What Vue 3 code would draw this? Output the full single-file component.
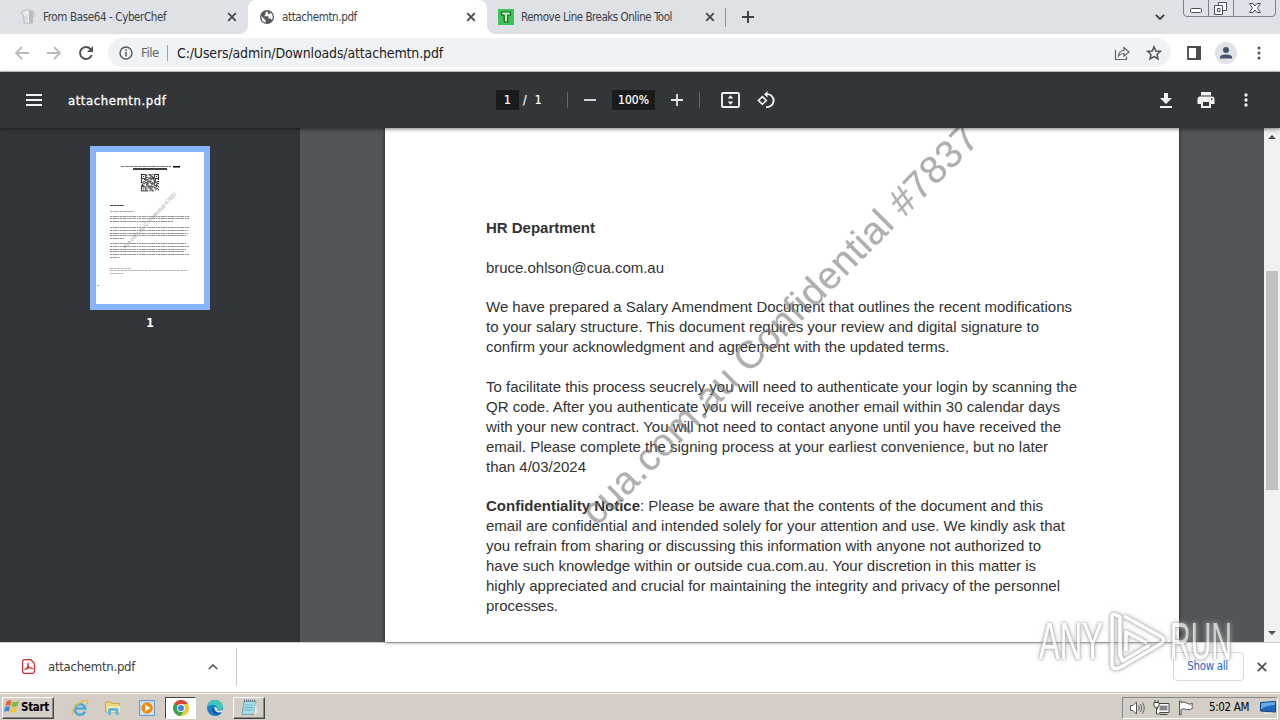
<script setup>
const paras = [
  [{ b: 'HR Department', w: 109 }],
  [{ t: 'bruce.ohlson@cua.com.au', w: 178 }],
  [
    { t: 'We have prepared a Salary Amendment Document that outlines the recent modifications', w: 586 },
    { t: 'to your salary structure. This document requires your review and digital signature to', w: 553 },
    { t: 'confirm your acknowledgment and agreement with the updated terms.', w: 463.5 },
  ],
  [
    { t: 'To facilitate this process seucrely you will need to authenticate your login by scanning the', w: 591 },
    { t: 'QR code. After you authenticate you will receive another email within 30 calendar days', w: 574 },
    { t: 'with your new contract. You will not need to contact anyone until you have received the', w: 575 },
    { t: 'email. Please complete the signing process at your earliest convenience, but no later', w: 562 },
    { t: 'than 4/03/2024', w: 100 },
  ],
  [
    { b: 'Confidentiality Notice', t: ': Please be aware that the contents of the document and this', w: 557 },
    { t: 'email are confidential and intended solely for your attention and use. We kindly ask that', w: 579 },
    { t: 'you refrain from sharing or discussing this information with anyone not authorized to', w: 555 },
    { t: 'have such knowledge within or outside cua.com.au. Your discretion in this matter is', w: 550 },
    { t: 'highly appreciated and crucial for maintaining the integrity and privacy of the personnel', w: 574 },
    { t: 'processes.', w: 72 },
  ],
]
const thumbLines = [
  [63, 80], [65, 79], [68, 63], [74, 80], [77, 78], [80, 78], [82, 76], [85, 14],
  [90, 76], [93, 79], [96, 76], [98, 75], [101, 79], [104, 10],
]
const qr = []
for (let y = 0; y < 17; y++) {
  for (let x = 0; x < 17; x++) {
    const fx = x > 8 ? 16 - x : x
    const fy = y > 8 ? 16 - y : y
    const finder = fx < 5 && fy < 5 && !(x > 8 && y > 8)
    const on = finder
      ? fx === 0 || fy === 0 || fx === 4 || fy === 4 || (fx === 2 && fy === 2)
      : (x * x * 7 + y * y * 11 + x * y * 5 + x * 3) % 13 < 7
    if (on) qr.push([x, y])
  }
}
</script>

<template>
  <div class="screen">
    <header class="tabs">
      <div class="tab first">
        <svg class="fav" viewBox="0 0 16 16"><path d="M3 6Q0 2 4 2Q7-1 10 2Q15 1 14 7L12 8V14H4V8Z" fill="#eee" stroke="#b5b5b5"/><path d="M9 2H13V14H9Z" fill="#bbb"/><path d="M5 7V12M7 6V12" stroke="#ccc"/></svg>
        <span class="tt">From Base64 - CyberChef</span>
        <svg class="x" viewBox="0 0 10 10"><path d="M1.2 1.2L8.8 8.8M8.8 1.2L1.2 8.8"/></svg>
      </div>
      <div class="tab active">
        <svg class="fav" viewBox="0 0 16 16"><circle cx="8" cy="8" r="7" fill="#55585c"/><path d="M2.3 7L6.6 11.2V13.8Q2 12 2.3 7ZM8 2.3L6.3 4V6L5 7.3H9.5V9.5H11.5L13 11Q15 6 11.5 3.5L10.5 5H9V3.8Z" fill="#fff"/></svg>
        <span class="tt">attachemtn.pdf</span>
        <svg class="x" viewBox="0 0 10 10"><path d="M1.2 1.2L8.8 8.8M8.8 1.2L1.2 8.8"/></svg>
      </div>
      <div class="tab third">
        <svg class="fav" viewBox="0 0 16 16"><path d="M0 0H16V16H0Z" fill="#3fc45a"/><path d="M3.500 3H12.500V6H9.800V13H6.200V6H3.500Z" fill="#c4f3c0" stroke="#175d25" stroke-width="1.200" stroke-linejoin="round"/></svg>
        <span class="tt">Remove Line Breaks Online Tool</span>
        <svg class="x" viewBox="0 0 10 10"><path d="M1.2 1.2L8.8 8.8M8.8 1.2L1.2 8.8"/></svg>
      </div>
      <i class="tabsep"></i>
      <svg class="plus" viewBox="0 0 12 12"><path d="M6 0V12M0 6H12" stroke="#3c4043" stroke-width="2"/></svg>
      <svg class="chev" viewBox="0 0 10 6"><path d="M.8 .8L5 5L9.2 .8" fill="none" stroke="#3c4043" stroke-width="1.8"/></svg>
      <svg class="winctl" viewBox="0 0 94 17"><path d="M.5 0V13Q.5 16.5 4 16.5H89Q92.5 16.5 92.5 13V0M25.5 0V16M50.5 0V16" fill="#dfe2e8" stroke="#7c818b"/><g fill="#fff" stroke="#4b505a"><rect x="7.500" y="8.500" width="11" height="4" rx="1"/><path d="M35.500 2.500H43.500V10.500H35.500Z"/><path d="M31.500 5.500H39.500V14.500H31.500Z"/><path d="M34.500 8.500H37V11.500H34.500Z"/><path d="M66.500 3.500H70L72 6L74 3.500H77.500L74.500 8L77.500 12.500H74L72 10L70 12.500H66.500L69.500 8Z"/></g></svg>
    </header>

    <div class="nav">
      <svg class="nv a" viewBox="0 0 16 16"><path d="M15 8H2M8 2L2 8L8 14" fill="none" stroke="#b9bbbe" stroke-width="1.8"/></svg>
      <svg class="nv b" viewBox="0 0 16 16"><path d="M1 8H14M8 2L14 8L8 14" fill="none" stroke="#b9bbbe" stroke-width="1.8"/></svg>
      <svg class="nv c" viewBox="0 0 16 16"><path d="M13.700 10A6 6 0 1 1 12.600 4.100L14 5.700" fill="none" stroke="#505357" stroke-width="2"/><path d="M15 1V7H9Z" fill="#505357"/></svg>
      <div class="omni">
        <svg class="info" viewBox="0 0 14 14"><circle cx="7" cy="7" r="6" fill="none" stroke="#55595d" stroke-width="1.400"/><path d="M7 6V10.500M7 3.500V5" stroke="#55595d" stroke-width="1.500"/></svg>
        <span class="file">File</span><i></i>
        <span class="url">C:/Users/admin/Downloads/attachemtn.pdf</span>
        <svg class="share" viewBox="0 0 16 16"><path d="M1.500 5V14.500H12.500V11.500M4.500 11Q5 5.500 10 5.500V2.500L15 7L10 11V8.500Q6.500 8.500 4.500 11Z" fill="none" stroke="#606469" stroke-width="1.200"/></svg>
        <svg class="star" viewBox="0 0 16 16"><path d="M8 1.800L9.800 6L14.500 6.400L11 9.500L12 14L8 11.600L4 14L5 9.500L1.500 6.400L6.200 6Z" fill="none" stroke="#505458" stroke-width="1.500"/></svg>
      </div>
      <svg class="panel" viewBox="0 0 14 14"><path d="M1 1H13V13H1Z" fill="#fff" stroke="#494c50" stroke-width="1.800"/><path d="M9 0H14V14H9Z" fill="#494c50"/></svg>
      <svg class="avatar" viewBox="0 0 22 22"><circle cx="11" cy="11" r="11" fill="#dfe2e7"/><circle cx="11" cy="8" r="3" fill="#47536f"/><path d="M5 16.500V15Q5 12.500 11 12.500T17 15V16.500Z" fill="#47536f"/></svg>
      <svg class="dots" viewBox="0 0 4 14"><g fill="#505357"><circle cx="2" cy="2" r="1.500"/><circle cx="2" cy="7" r="1.500"/><circle cx="2" cy="12" r="1.500"/></g></svg>
    </div>

    <div class="pdfbar">
      <svg class="menu" viewBox="0 0 16 12"><path d="M0 1H16M0 6H16M0 11H16" stroke="#f4f4f4" stroke-width="2"/></svg>
      <span class="title">attachemtn.pdf</span>
      <span class="box one">1</span><span class="of">/&nbsp; 1</span>
      <i class="s1"></i>
      <svg class="minus" viewBox="0 0 12 12"><path d="M0 6H12" stroke="#e6e7e8" stroke-width="1.800"/></svg>
      <span class="box pct">100%</span>
      <svg class="add" viewBox="0 0 12 12"><path d="M0 6H12M6 0V12" stroke="#e6e7e8" stroke-width="1.800"/></svg>
      <i class="s2"></i>
      <svg class="fit" viewBox="0 0 19 16"><rect x="1" y="1" width="17" height="14" rx="1" fill="none" stroke="#f1f1f1" stroke-width="1.900"/><path d="M9.500 3.300L12.300 6.500H6.700ZM9.500 12.700L12.300 9.500H6.700Z" fill="#f1f1f1"/></svg>
      <svg class="rot" viewBox="0 0 18 18"><path d="M9 3.200A6.500 6.500 0 1 1 9 16" fill="none" stroke="#f1f1f1" stroke-width="1.900"/><path d="M10.500 0V6.400L7 3.200Z" fill="#f1f1f1"/><path d="M5.400 5.600L9.300 9.500L5.400 13.400L1.500 9.500Z" fill="#323639" stroke="#f1f1f1" stroke-width="1.700"/></svg>
      <svg class="dl" viewBox="0 0 12 15"><path d="M4 0H8V5H12L6 11L0 5H4ZM0 13H12V15H0Z" fill="#f1f1f1"/></svg>
      <svg class="print" viewBox="0 0 18 16"><path d="M4 0H14V3.500H4ZM3 4.500H15Q17.500 4.500 17.500 7.500V12H14V16H4V12H.5V7.500Q.5 4.500 3 4.500Z" fill="#f1f1f1"/><path d="M6 10H12V14H6ZM14 6.500H15.500V8H14Z" fill="#323639"/></svg>
      <svg class="more" viewBox="0 0 4 14"><g fill="#f1f1f1"><circle cx="2" cy="2" r="1.700"/><circle cx="2" cy="7" r="1.700"/><circle cx="2" cy="12" r="1.700"/></g></svg>
    </div>

    <main class="viewer">
      <aside>
        <div class="thumb">
          <svg viewBox="0 0 108 152">
            <path d="M25 14.500H75" stroke="#666" stroke-width=".9" stroke-dasharray="3 .5 5 .4"/><path d="M77 14.700H84M37 17H71" stroke="#000" stroke-width="1.400"/>
            <g transform="translate(45 22)"><rect v-for="([x, y], i) in qr" :key="i" :x="x * 1.06" :y="y * 1.02" width="1.08" height="1.04" fill="#222"/></g>
            <path d="M14 53.500H28" stroke="#444" stroke-width="1.100" stroke-dasharray="3 .3"/><path d="M14 59.500H38" stroke="#888" stroke-width=".8" stroke-dasharray="2 .5"/>
            <path v-for="([y, w], i) in thumbLines" :key="i" :d="`M14 ${y + 1.5}h${w}`" stroke="#888" stroke-width=".9" stroke-dasharray="2.500 .5 4 .6 1.500 .5"/>
            <path d="M14 116.500H35M14 118.500H92M14 121.500H28" stroke="#999" stroke-width=".7" stroke-dasharray="3 .5"/><path d="M1 133.500H3.500" stroke="#aaa"/>
            <text transform="translate(29 97) rotate(-46.500)" textLength="76" font-size="5.800" fill="#a9a9a9">cua.com.au Confidential #7837</text>
          </svg>
        </div>
        <span>1</span>
      </aside>
      <section class="canvas">
        <article class="page">
          <div v-for="(p, i) in paras" :key="i" class="para">
            <svg v-for="(l, j) in p" :key="j" class="line"><text x="0" y="15" :textLength="l.w"><tspan v-if="l.b" font-weight="bold">{{ l.b }}</tspan><tspan v-if="l.t">{{ l.t }}</tspan></text></svg>
          </div>
          <svg class="mark" viewBox="0 0 794 514"><text transform="translate(212 399) rotate(-45.200)" textLength="545" font-size="38.500">cua.com.au Confidential #7837</text></svg>
        </article>
      </section>
      <div class="scroll"><b class="up"></b><div class="grip"></div><b class="down"></b></div>
    </main>

    <footer class="shelf">
      <svg class="pdf" viewBox="0 0 14 16"><path d="M2 .7H9.500L13.300 4.500V13.500Q13.300 15.300 11.500 15.300H2.500Q.7 15.300 .7 13.500V2Z" fill="#fff" stroke="#d62b3b" stroke-width="1.300"/><path d="M3 11.700C5.500 10.500 7.500 7 6.500 4.500C5 6.500 8 10.500 11.200 10.200C9 8.600 5 9.500 3 11.700Z" fill="none" stroke="#d62b3b" stroke-width="1.200"/></svg>
      <span class="name">attachemtn.pdf</span>
      <svg class="upc" viewBox="0 0 10 6"><path d="M.8 5L5 1L9.200 5" fill="none" stroke="#505357" stroke-width="1.600"/></svg>
      <i></i>
      <button>Show all</button>
      <svg class="close" viewBox="0 0 10 10"><path d="M.8 .8L9.200 9.200M9.200 .8L.8 9.200" stroke="#505357" stroke-width="1.800"/></svg>
    </footer>

    <div class="taskbar">
      <div class="start">
        <svg viewBox="0 0 16 14"><path d="M2.500 2Q5 0 7.500 1.500L6.300 6.300Q4 5 1.300 6.500Z" fill="#e7653b"/><path d="M8.500 2Q11.500 3.500 15 1.500L13.500 6.500Q10.500 8 7.300 6.800Z" fill="#7dbb42"/><path d="M1 7.500Q4 6 6 7.300L5 12Q3 11 0 12Z" fill="#3f8ed8"/><path d="M7 7.800Q10 9 13.200 7.500L12 12Q9 14 6 12.500Z" fill="#f3c33c"/></svg>
        Start
      </div>
      <svg class="tk ie" viewBox="0 0 18 18"><path d="M14 12.500A5.300 5.300 0 1 1 14.300 9.500H5" fill="none" stroke="#48a9df" stroke-width="2.500"/><path d="M2 16Q-1 13 6 6Q14 0 16.500 2Q17.500 3.500 15.500 6" fill="none" stroke="#e5b93c" stroke-width="1.300"/></svg>
      <svg class="tk ex" viewBox="0 0 18 18"><path d="M1.500 3H7L8 4.500H15.500V13H1.500Z" fill="#efd77c" stroke="#c9a84c"/><path d="M3 7H16V13H3Z" fill="#f8eaa9"/><path d="M4 16V10.500Q4 9 5.500 9H13Q14.500 9 14.500 10.500V16H11.500V12H7V16Z" fill="#64b6dd"/></svg>
      <svg class="tk wm" viewBox="0 0 18 18"><path d="M1.500 1.500H16.500V16.500H1.500Z" fill="#b5d9ef" stroke="#6d9dc4"/><path d="M3 4H15V15H3Z" fill="#dceaf4"/><circle cx="9" cy="9" r="5.800" fill="#f38a18"/><path d="M7 5.500L12.500 9L7 12.500Z" fill="#fff"/></svg>
      <div class="slot chrome"><svg class="tk" viewBox="0 0 18 18"><circle cx="9" cy="9" r="8" fill="#f6c52b"/><path d="M9 9L2.100 5A8 8 0 0 1 15.900 5H9Z" fill="#db4437"/><path d="M2.100 5A8 8 0 0 0 8.500 17L12.500 11L9 9Z" fill="#37a455"/><circle cx="9" cy="9" r="4" fill="#fff"/><circle cx="9" cy="9" r="3.100" fill="#4285f4"/></svg></div>
      <svg class="tk edge" viewBox="0 0 18 18"><circle cx="9" cy="9" r="8" fill="#1683cf"/><path d="M1.200 8Q3 1 9 1Q16.500 1.500 17 8Q16 12 11 11Q12 7 8 6Q4 5 1.200 8Z" fill="#40c8b6"/><path d="M7 8Q4.500 12 9 15.500Q13 17 15.500 13.500Q9.500 14.500 8.500 10Z" fill="#1456a2"/><path d="M8.500 8Q11 7.500 11 11Q12 12.500 17 11L16 13Q10 14.500 8.500 10Z" fill="#e5edf0"/></svg>
      <div class="slot note"><svg class="tk" viewBox="0 0 18 18"><path d="M4 2.500H16L14 15.500H2Z" fill="#a5dce6" stroke="#7c9fab"/><path d="M4 1.500H16" stroke="#596b72" stroke-width="1.600" stroke-dasharray="1 1"/><path d="M5 6H13M4.500 8.500H13M4 11H12.500" stroke="#6fb8c8"/><path d="M14 15.500L16 3L17 14Z" fill="#e9eef0"/></svg></div>
      <div class="tray">
        <svg class="vol" viewBox="0 0 17 16"><path d="M1.500 5.500H4L7.500 2V14L4 10.500H1.500Z" fill="#fff" stroke="#555"/><path d="M9.500 5.500Q11 8 9.500 10.500M11.500 4Q14 8 11.500 12M13.500 2.500Q17 8 13.500 13.500" fill="none" stroke="#666"/></svg>
        <svg class="net" viewBox="0 0 17 16"><path d="M5.500 4.500H15.500V11.500H5.500Z" fill="#888" stroke="#fff" stroke-width="2"/><path d="M4.500 3.500H16V12.500H4.500ZM7 14.500H14.500" fill="none" stroke="#444"/><path d="M1 2.500H6V6Q6 7.500 3.500 7.500T1 6ZM2 0V3M5 0V3M3.500 7V14H7" fill="#fff" stroke="#444"/></svg>
        <svg class="flag" viewBox="0 0 16 16"><path d="M1.500 1V15H3V9.500Q6 8 8.500 9.500Q12 11 15 7.500Q13 7 14.500 3.500Q11 5 8.500 3Q6 1.500 3 2.500V1Z" fill="#fff" stroke="#555"/></svg>
        <span>5:02 AM</span>
        <svg class="desk" viewBox="0 0 16 13"><path d="M.5 1.500L15.500 .5V11L.5 10Z" fill="#1f67bd" stroke="#173f7c"/><path d="M1 2L15 1V4Q7 4 1 8Z" fill="#5fa9e8"/><path d="M4 12.300H12" stroke="#eee"/></svg>
      </div>
    </div>

    <svg class="brand" viewBox="0 0 200 76">
      <text x="5" y="56" textLength="64" lengthAdjust="spacingAndGlyphs">ANY</text>
      <text x="136" y="56" textLength="62" lengthAdjust="spacingAndGlyphs">RUN</text>
      <path d="M78 50V14Q78 10 82 12L86 14V52L89 58L116 42M92 48V29L113 40M90 13L128 34Q131 37 128 40L87 64Q78 68 78 61V50"/>
    </svg>
  </div>
</template>

<style>
body { margin: 0; overflow: hidden; }
</style>
<style scoped>
* { box-sizing: border-box; }
svg { display: block; flex: none; }
.screen { width: 1280px; height: 720px; position: relative; overflow: hidden; display: flex; flex-direction: column; background: #fff; font: 12px "DejaVu Sans Condensed", "DejaVu Sans", sans-serif; font-stretch: condensed; color: #3c4043; }
.screen > * { flex: none; }
span { white-space: nowrap; }
.tabs { height: 34px; background: #dee1e6; display: flex; align-items: center; }
.tab { height: 34px; display: flex; align-items: center; position: relative; }
.first { width: 248px; padding-left: 20px; }
.active { width: 239px; background: #fff; border-radius: 8px 8px 0 0; padding-left: 11px; }
.active::before, .active::after { content: ""; position: absolute; bottom: 0; width: 8px; height: 8px; }
.active::before { left: -8px; background: radial-gradient(circle at 0 0, transparent 7.5px, #fff 8px); }
.active::after { right: -8px; background: radial-gradient(circle at 100% 0, transparent 7.5px, #fff 8px); }
.third { width: 238px; padding-left: 11px; }
.fav { width: 16px; height: 16px; margin-right: 7px; }
.tt { font-size: 11.5px; letter-spacing: -.37px; }
.active .tt { letter-spacing: -.38px; }
.third .tt { letter-spacing: -.47px; }
.x { width: 10px; height: 10px; margin-left: auto; margin-right: 11px; stroke: #45494e; stroke-width: 1.8; }
.third .x { margin-right: 10px; }
.tabsep { width: 1px; height: 19px; background: #8d9197; }
.plus { width: 12px; height: 12px; margin-left: 16px; }
.chev { width: 10px; height: 6px; margin-left: auto; margin-right: 18px; }
.winctl { width: 94px; height: 17px; align-self: flex-start; margin-right: 3px; }
.nav { height: 38px; border-bottom: 1px solid #d2d5d8; display: flex; align-items: center; }
.nv { width: 16px; height: 16px; }
.a { margin-left: 14px; }.b { margin-left: 16px; }.c { margin-left: 16px; }
.omni { width: 1063px; height: 29px; margin-left: 14px; border-radius: 15px; background: #f0f3f5; display: flex; align-items: center; padding-left: 11px; }
.info { width: 14px; height: 14px; margin-right: 8px; }
.file { width: 19px; font-size: 13px; letter-spacing: -.4px; color: #5f6368; }
.omni i { width: 1px; height: 16px; background: #9da0a4; margin: 0 9px 0 7px; }
.url { font-size: 14px; letter-spacing: -.14px; color: #202124; }
.share { width: 16px; height: 16px; margin-left: auto; }
.star { width: 16px; height: 16px; margin: 0 9px 0 16px; }
.panel { width: 14px; height: 14px; margin-left: 16px; }
.avatar { width: 22px; height: 22px; margin-left: 14px; }
.dots { width: 4px; height: 14px; margin-left: 20px; }
.pdfbar { height: 56px; position: relative; z-index: 2; background: #323639; color: #fff; display: flex; align-items: center; box-shadow: 0 1px 4px #0008; }
.menu { width: 16px; height: 12px; margin-left: 26px; }
.title { margin-left: 26px; width: 428px; font-size: 13px; letter-spacing: .55px; -webkit-text-stroke: .3px #fff; }
.box { height: 20px; line-height: 20px; background: #191b1c; text-align: center; -webkit-text-stroke: .2px #fff; }
.one { width: 23px; }.of { width: 20px; margin-left: 4px; letter-spacing: .4px; -webkit-text-stroke: .2px #fff; }
.pdfbar i { width: 1px; height: 16px; background: #65686b; }
.s1 { margin-left: 24px; }
.minus { width: 12px; height: 12px; margin-left: 16px; }
.pct { width: 43px; margin-left: 16px; }
.add { width: 12px; height: 12px; margin-left: 16px; }
.s2 { margin-left: 16px; }
.fit { width: 19px; height: 16px; margin-left: 21px; }
.rot { width: 18px; height: 18px; margin-left: 17px; }
.dl { width: 12px; height: 15px; margin-left: auto; }
.print { width: 18px; height: 16px; margin-left: 25px; }
.more { width: 4px; height: 14px; margin-left: 29px; margin-right: 32px; }
.viewer { height: 514px; display: flex; }
aside { width: 300px; background: #323639; color: #fff; display: flex; flex-direction: column; align-items: center; padding-top: 18px; font-size: 12px; font-weight: bold; }
aside span { margin-top: 6px; }
.thumb { width: 120px; height: 164px; background: #fff; border: 6px solid #8ab4f8; }
.thumb svg { width: 108px; height: 152px; font-family: "Liberation Sans", Arial, sans-serif; font-weight: normal; }
.canvas { width: 964px; background: #525659; padding-left: 85px; }
.page { width: 794px; height: 514px; background: #fff; position: relative; padding: 90px 0 0 101px; box-shadow: 0 0 4px #000a; font: 15px "Liberation Sans", Arial, sans-serif; overflow: hidden; }
.para { margin-bottom: 19.6px; }
.line { width: 620px; height: 20px; fill: #333; overflow: visible; }
.mark { position: absolute; left: 0; top: 0; width: 794px; height: 514px; fill: #767676; opacity: .58; stroke: #767676; stroke-width: .3; }
.scroll { width: 16px; background: #f1f1f1; display: flex; flex-direction: column; align-items: center; position: relative; }
.grip { width: 12px; height: 219px; background: #c1c1c1; margin-top: 131px; }
.up, .down { border: 4px solid transparent; width: 0; height: 0; }
.up { border-bottom-color: #505050; border-top: 0; margin-top: 7px; margin-bottom: 1px; }
.down { border-top-color: #505050; border-bottom: 0; margin-top: auto; margin-bottom: 7px; }
.shelf { height: 50px; border-top: 1px solid #cfcfcf; background: #fff; display: flex; align-items: center; padding-bottom: 2px; }
.pdf { width: 13px; height: 15px; margin-left: 22px; margin-right: 13px; }
.name { font-size: 13px; width: 160px; letter-spacing: -.25px; }
.upc { width: 10px; height: 6px; }
.shelf i { width: 1px; height: 38px; background: #c9c9c9; margin-left: 18px; }
.shelf button { margin-left: auto; width: 71px; height: 29px; border: 1px solid #d7dadd; border-radius: 4px; background: #fff; color: #1a66cc; font: inherit; font-size: 11.5px; padding: 0 2px 2px 0; letter-spacing: -.35px; }
.close { width: 10px; height: 10px; margin: 0 13px; }
.taskbar { height: 28px; background: #d5cec6; border-top: 1px solid #c4c0ba; box-shadow: inset 0 1px #f8f6f3; display: flex; align-items: center; padding-top: 2px; color: #000; }
.start { width: 52px; height: 22px; margin-left: 2px; border: 1px solid; border-color: #fff #444 #444 #fff; box-shadow: inset -1px -1px #888; font-weight: bold; font-size: 11.5px; letter-spacing: -.3px; display: flex; align-items: center; gap: 1px; padding: 0 0 2px 1px; }
.start svg { width: 16px; height: 15px; }
.tk { width: 18px; height: 18px; }
.ie { margin-left: 17px; }.ex { margin-left: 15px; }.wm { margin-left: 16px; }
.slot { height: 22px; display: flex; align-items: center; justify-content: center; }
.chrome { width: 31px; margin-left: 9px; background: #fff; border: 1px solid; border-color: #444 #fff #fff #444; }
.edge { margin-left: 10px; }
.note { width: 32px; margin-left: 9px; border: 1px solid; border-color: #fff #444 #444 #fff; box-shadow: inset -1px -1px #888; }
.tray { width: 156px; height: 22px; margin-left: auto; margin-right: 2px; border: 1px solid; border-color: #888 #fff #fff #888; display: flex; align-items: center; }
.vol { width: 17px; height: 16px; margin-left: 6px; }
.net { width: 17px; height: 16px; margin-left: 7px; }
.flag { width: 16px; height: 16px; margin-left: 8px; }
.tray span { margin: -2px 0 0 15px; width: 42px; font-size: 11.5px; letter-spacing: -.35px; }
.desk { width: 16px; height: 13px; margin-left: auto; margin-right: 1px; }
.brand { position: absolute; left: 1034px; top: 603px; width: 200px; height: 76px; font-family: "Liberation Sans", Arial, sans-serif; font-size: 51px; fill: #fff; opacity: .72; filter: drop-shadow(0 0 1.5px #777) drop-shadow(0 0 2px #bbb); overflow: visible; }
.brand path { fill: none; stroke: #fff; stroke-width: 3.5; stroke-linejoin: round; }
</style>
